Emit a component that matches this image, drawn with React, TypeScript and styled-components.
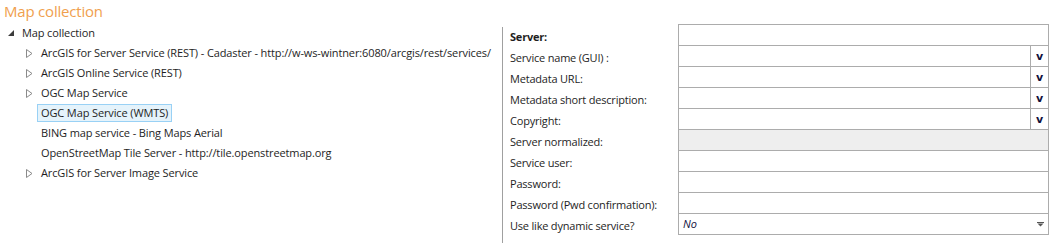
import React from 'react';
import styled, { createGlobalStyle } from 'styled-components';

const GlobalStyle = createGlobalStyle`
  html, body {
    margin: 0;
    padding: 0;
    background: #ffffff;
  }
  body {
    font-family: "Open Sans", "Noto Sans", sans-serif;
    font-size: 12px;
    color: #1e1e1e;
  }
`;

const Page = styled.div`
  display: flex;
  width: 1053px;
  height: 243px;
  overflow: hidden;
`;

const LeftPane = styled.div`
  width: 502px;
  flex-shrink: 0;
  display: flex;
  flex-direction: column;
`;

const Title = styled.div`
  height: 22px;
  padding-left: 4px;
  font-size: 15px;
  line-height: 22px;
  color: #f0a04e;
  letter-spacing: -0.2px;
`;

const Tree = styled.ul`
  list-style: none;
  margin: 1px 0 0;
  padding: 0;
`;

const Node = styled.li<{ $depth: number }>`
  display: flex;
  align-items: center;
  height: 20px;
  padding-left: ${p => (p.$depth === 0 ? 8 : 26)}px;
  white-space: nowrap;
`;

const Toggle = styled.span<{ $depth: number }>`
  width: ${p => (p.$depth === 0 ? 10 : 11)}px;
  flex-shrink: 0;
  display: flex;
  align-items: center;
  justify-content: flex-start;
`;

const Label = styled.span<{ $selected?: boolean }>`
  font-size: 11px;
  letter-spacing: -0.12px;
  padding: 0 3px;
  height: 18px;
  line-height: 16px;
  border: 1px solid ${p => (p.$selected ? '#99d1f5' : 'transparent')};
  background: ${p => (p.$selected ? '#e5f3fb' : 'transparent')};
  box-sizing: border-box;
`;

const RightPane = styled.div`
  display: flex;
  padding-top: 24px;
`;

const Divider = styled.div`
  width: 1px;
  margin-top: 3px;
  background: #a0a0a0;
`;

const Form = styled.div`
  display: grid;
  grid-template-columns: 168px 371px;
  grid-auto-rows: 21px;
  margin-left: 7px;
`;

const FieldLabel = styled.div<{ $bold?: boolean }>`
  font-size: 11px;
  letter-spacing: -0.2px;
  font-weight: ${p => (p.$bold ? 700 : 400)};
  line-height: 21px;
  padding-top: 2px;
  white-space: nowrap;
`;

const Field = styled.div<{ $disabled?: boolean }>`
  height: 22px;
  box-sizing: border-box;
  border: 1px solid #acacac;
  background: ${p => (p.$disabled ? '#eeeeee' : '#ffffff')};
  display: flex;
  align-items: stretch;
`;

const FieldInput = styled.div`
  flex: 1;
`;

const VButton = styled.div`
  width: 17px;
  border-left: 1px solid #acacac;
  display: flex;
  align-items: center;
  justify-content: center;
  font-family: "DejaVu Sans", Verdana, sans-serif;
  font-weight: 700;
  font-size: 11px;
  color: #10103a;
`;

const SelectValue = styled.div`
  flex: 1;
  font-style: italic;
  font-size: 11px;
  line-height: 20px;
  padding-left: 4px;
  color: #101040;
`;

const Caret = styled.div`
  width: 16px;
  display: flex;
  align-items: center;
  justify-content: center;
`;

const Collapsed = () => (
  <svg width="7" height="9" viewBox="0 0 7 9">
    <polygon points="0.5,0.5 6,4.5 0.5,8.5" fill="none" stroke="#8a8a8a" strokeWidth="1" />
  </svg>
);

const Expanded = () => (
  <svg width="6" height="6" viewBox="0 0 6 6">
    <polygon points="6,0 6,6 0,6" fill="#3c3c3c" />
  </svg>
);

type Item = { label: string; expandable?: boolean; selected?: boolean };

const children: Item[] = [
  { label: 'ArcGIS for Server Service (REST) - Cadaster - http://w-ws-wintner:6080/arcgis/rest/services/', expandable: true },
  { label: 'ArcGIS Online Service (REST)', expandable: true },
  { label: 'OGC Map Service', expandable: true },
  { label: 'OGC Map Service (WMTS)', selected: true },
  { label: 'BING map service - Bing Maps Aerial' },
  { label: 'OpenStreetMap Tile Server - http://tile.openstreetmap.org' },
  { label: 'ArcGIS for Server Image Service', expandable: true },
];

type Row = { label: string; bold?: boolean; kind?: 'text' | 'combo' | 'disabled' | 'select' };

const rows: Row[] = [
  { label: 'Server:', bold: true },
  { label: 'Service name (GUI) :', kind: 'combo' },
  { label: 'Metadata URL:', kind: 'combo' },
  { label: 'Metadata short description:', kind: 'combo' },
  { label: 'Copyright:', kind: 'combo' },
  { label: 'Server normalized:', kind: 'disabled' },
  { label: 'Service user:' },
  { label: 'Password:' },
  { label: 'Password (Pwd confirmation):' },
  { label: 'Use like dynamic service?', kind: 'select' },
];

const App: React.FC = () => {
  return (
    <Page>
      <GlobalStyle />
      <LeftPane>
        <Title>Map collection</Title>
        <Tree>
          <Node $depth={0}>
            <Toggle $depth={0}><Expanded /></Toggle>
            <Label>Map collection</Label>
          </Node>
          {children.map(item => (
            <Node key={item.label} $depth={1}>
              <Toggle $depth={1}>{item.expandable && <Collapsed />}</Toggle>
              <Label $selected={item.selected}>{item.label}</Label>
            </Node>
          ))}
        </Tree>
      </LeftPane>
      <RightPane>
        <Divider />
        <Form>
          {rows.map(row => (
            <React.Fragment key={row.label}>
              <FieldLabel $bold={row.bold}>{row.label}</FieldLabel>
              <Field $disabled={row.kind === 'disabled'}>
                {row.kind === 'select' ? (
                  <>
                    <SelectValue>No</SelectValue>
                    <Caret>
                      <svg width="7" height="5" viewBox="0 0 7 5">
                        <rect x="0" y="0" width="7" height="1" fill="#555" />
                        <polygon points="0.5,1.5 6.5,1.5 3.5,4.5" fill="#555" />
                      </svg>
                    </Caret>
                  </>
                ) : (
                  <FieldInput />
                )}
                {row.kind === 'combo' && <VButton>v</VButton>}
              </Field>
            </React.Fragment>
          ))}
        </Form>
      </RightPane>
    </Page>
  );
};

export default App;
